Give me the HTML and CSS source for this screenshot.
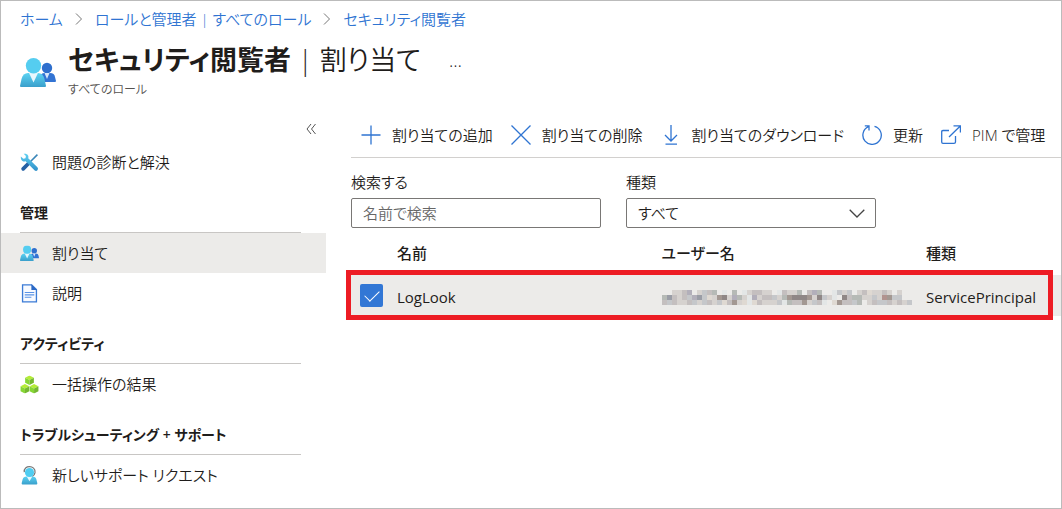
FILE: index.html
```html
<!DOCTYPE html>
<html lang="ja">
<head>
<meta charset="utf-8">
<meta name="viewport" content="width=device-width, initial-scale=1">
<title>セキュリティ閲覧者 | 割り当て</title>
<link rel="stylesheet" href="styles.css">
</head>
<body>
<svg class="defs" aria-hidden="true">
  <defs>
    <linearGradient id="cyan" x1="0" y1="0" x2="0" y2="1"><stop offset="0" stop-color="#5cd3f3"/><stop offset="1" stop-color="#3a9fcb"/></linearGradient>
    <linearGradient id="tool" x1="0" y1="0" x2="0" y2="1"><stop offset="0" stop-color="#5fd0f2"/><stop offset="1" stop-color="#2f8fc8"/></linearGradient>
    <symbol id="users" viewBox="0 0 36 30">
      <circle cx="27" cy="10" r="5.2" fill="#2f6fcd"/>
      <path d="M20 24V20Q20 15.500 24 15h6q4.500 0 5 4l1 4q0 1-1 1z" fill="#3273d3"/>
      <path d="M24.500 15h5L27 21z" fill="#d6e6fa"/>
      <path d="M1 29q-1 0-1-1l1.500-7Q3 15 8 15h10q5 0 6.500 6L26 28q0 1-1 1z" fill="url(#cyan)"/>
      <path d="M9 15h9l-4.500 9.500z" fill="#e8f7fd"/>
      <circle cx="13.500" cy="7.700" r="7.700" fill="#55cdf0"/>
    </symbol>
    <symbol id="cube" viewBox="0 0 10 10">
      <path d="M5 0l4.600 2.300L5 4.800.4 2.300z" fill="#b4ec36"/>
      <path d="M.4 2.300L5 4.800v5.200L.4 7.600z" fill="#86d633"/>
      <path d="M9.600 2.300L5 4.800v5.200l4.600-2.400z" fill="#74b830"/>
    </symbol>
  </defs>
</svg>
<div class="page">
  <nav class="crumbs" aria-label="階層">
    <a href="#">ホーム</a>
    <svg class="sep" viewBox="0 0 8 14"><path d="M1 1.500L6.500 7 1 12.500"/></svg>
    <a href="#">ロールと管理者 | すべてのロール</a>
    <svg class="sep" viewBox="0 0 8 14"><path d="M1 1.500L6.500 7 1 12.500"/></svg>
    <a href="#">セキュリティ閲覧者</a>
  </nav>
  <header class="head">
    <svg class="head-icon"><use href="#users"/></svg>
    <div>
      <div class="title-row">
        <h1><b>セキュリティ閲覧者</b> | 割り当て</h1>
        <button class="more" aria-label="その他">…</button>
      </div>
      <p class="subtitle">すべてのロール</p>
    </div>
  </header>
  <div class="body">
    <aside class="side">
      <button class="collapse" aria-label="折りたたむ"><svg viewBox="0 0 10 12"><path d="M5 1L1 6l4 5M9.500 1l-4 5 4 5"/></svg></button>
      <a class="item" href="#">
        <svg viewBox="0 0 18 18"><path d="M16.500 1.500L10 8" stroke="#3a86b8" stroke-width="1.500" fill="none"/><path d="M8.500 9.500L3 15" stroke="#2460a4" stroke-width="3.600" stroke-linecap="round"/><path d="M.8 3.200l2.400 2.300 2-.6.400-2L3.500.8C7 .2 8.600 2.600 7.800 5l8.700 8.600q1.200 1.500 0 2.800t-2.800 0L5.300 7.900C2.600 8.600.4 6.500.8 3.200z" fill="url(#tool)"/></svg>
        問題の診断と解決</a>
      <h2>管理</h2>
      <a class="item current" href="#" aria-current="page"><svg viewBox="0 0 36 30"><use href="#users"/></svg>割り当て</a>
      <a class="item" href="#">
        <svg viewBox="0 0 18 20"><path d="M1.700.9h9.600l5 5v13H1.700z" fill="#f7faff" stroke="#3b7bd6" stroke-width="1.400"/><path d="M11 .3V6.400h6z" fill="#2c68c4"/><path d="M4 9h10M4 11.500h10M4 14h7" stroke="#5a93e6" stroke-width="1.200"/></svg>
        説明</a>
      <h2>アクティビティ</h2>
      <a class="item" href="#">
        <svg viewBox="0 0 20 19"><use href="#cube" x="4.500" y="0" width="11" height="10"/><use href="#cube" x="-.3" y="9" width="11" height="10"/><use href="#cube" x="9.300" y="9" width="11" height="10"/></svg>
        一括操作の結果</a>
      <h2>トラブルシューティング + サポート</h2>
      <a class="item" href="#">
        <svg viewBox="0 0 18 20"><path d="M3.500 6.500C3 2.500 6 .7 9 .7s6.400 2 5.800 6.300q-.5 3-3 4" fill="none" stroke="#777" stroke-width="1.300"/><path d="M1.500 19.500q-1-.3-.7-1.500l1-4q.8-3 4-3h6.400q3.200 0 4 3l1 4q.3 1.200-.7 1.500z" fill="url(#cyan)"/><path d="M6 11h6l-3 5z" fill="#e8f7fd"/><circle cx="9" cy="6.800" r="4.800" fill="#4fcdf1"/></svg>
        新しいサポート リクエスト</a>
    </aside>
    <main class="main">
      <div class="toolbar">
        <button><svg viewBox="0 0 20 20"><path d="M10 .5v19M.5 10h19"/></svg>割り当ての追加</button>
        <button><svg viewBox="0 0 20 20"><path d="M.5.5l19 19M19.500.5l-19 19"/></svg>割り当ての削除</button>
        <button><svg viewBox="0 0 20 20"><path d="M10 0v15.500M4 10l6 6 6-6M4.500 19.200h11.500"/></svg>割り当てのダウンロード</button>
        <button><svg viewBox="0 0 20 20"><path d="M12.500 1.300a9.200 9.200 0 1 1-6 .4M2.800.8h4.200V5.500"/></svg>更新</button>
        <button><svg viewBox="0 0 20 20"><path d="M8 5.500H2q-1.300 0-1.300 1.300V17q0 1.400 1.300 1.400h11q1.500 0 1.500-1.400v-6M8 12L19.300 1M12.500.8h6.900v6.800"/></svg>PIM で管理</button>
      </div>
      <div class="filters">
        <div class="field"><label for="q">検索する</label><input id="q" type="text" placeholder="名前で検索"></div>
        <div class="field"><label for="kind">種類</label>
          <div class="select"><select id="kind"><option>すべて</option></select><svg viewBox="0 0 16 9"><path d="M.7.8L8 8l7.300-7.200"/></svg></div>
        </div>
      </div>
      <div class="grid">
        <table>
          <thead><tr><th class="check"></th><th>名前</th><th>ユーザー名</th><th class="kind">種類</th></tr></thead>
          <tbody><tr>
            <td class="check"><input type="checkbox" checked aria-label="LogLook を選択"></td>
            <td>LogLook</td>
            <td><svg class="mosaic" id="mosaic" viewBox="0 0 50 3" role="img" aria-label="非表示"></svg></td>
            <td>ServicePrincipal</td>
          </tr></tbody>
        </table>
        <div class="highlight"></div>
      </div>
    </main>
  </div>
</div>
<script src="mosaic.js"></script>
</body>
</html>
```
FILE: styles.css
```css
* { box-sizing: border-box; }
body {
  margin: 0;
  font: 350 15px/22px "Open Sans", "Noto Sans CJK JP", sans-serif;
  font-feature-settings: "palt";
  color: #1f1d1b;
  background: #fff;
}
button, input, select { font: inherit; font-feature-settings: inherit; color: inherit; }
button { border: 0; padding: 0; background: none; white-space: nowrap; }
a { color: inherit; text-decoration: none; }
svg { flex: none; display: block; }
.defs { position: absolute; width: 0; height: 0; }
.page { min-height: 100vh; border: 1px solid #bbb; }

.crumbs { display: flex; align-items: center; gap: 12px; padding: 6px 19px 0; font-size: 15px; line-height: 24px; white-space: nowrap; color: #2f74d2; }
.sep { width: 8px; height: 14px; fill: none; stroke: #777; }

.head { display: flex; padding: 10px 19px 0; gap: 12px; }
.head-icon { width: 36px; height: 30px; margin-top: 17px; }
.title-row { display: flex; align-items: center; gap: 28px; }
h1 { margin: 0; font-size: 27px; line-height: 38px; font-weight: 350; white-space: nowrap; }
h1 b { font-weight: 600; }
.more { font-size: 18px; }
.subtitle { margin: 0; font-size: 12px; color: #55524f; }

.body { display: flex; padding-top: 17px; }
.side { flex: none; width: 325px; }
.collapse { display: block; margin: 0 10px 2px auto; padding: 5px 0; }
.collapse svg { width: 10px; height: 12px; fill: none; stroke: #555; }
.item { display: flex; align-items: center; gap: 13px; height: 40px; padding-left: 19px; }
.item svg { width: 19px; height: 19px; }
.item.current { background: #ecebe9; }
h2 { margin: 0 25px 0 19px; padding: 20px 0 8px; border-bottom: 1px solid #c8c6c4; font-size: 14px; line-height: 22px; font-weight: 600; }

.main { flex: 1; min-width: 0; margin-left: 25px; }
.toolbar { display: flex; gap: 18px; height: 40px; padding: 0 0 5px 10px; border-bottom: 1px solid #d2d0ce; }
.toolbar button { display: flex; align-items: center; gap: 11px; }
.toolbar svg { width: 20px; height: 20px; fill: none; stroke: #2f74d2; stroke-width: 1.300; }

.filters { display: flex; gap: 25px; padding-top: 13px; }
.field { width: 250px; }
.field label { display: block; margin-bottom: 5px; }
.field input, .field select { display: block; width: 100%; height: 30px; padding: 0 11px 1px; border: 1px solid #797775; border-radius: 2px; background: #fff; }
.field input::placeholder { color: #666; opacity: 1; }
.select { display: grid; align-items: center; }
.select > * { grid-area: 1 / 1; }
.field select { appearance: none; }
.select svg { justify-self: end; width: 16px; height: 9px; margin-right: 11px; fill: none; stroke: #444; stroke-width: 1.300; pointer-events: none; }

.grid { position: relative; padding-top: 4px; }
table { width: 100%; table-layout: fixed; border-collapse: collapse; }
th, td { padding: 0; text-align: left; }
th { height: 43px; padding-bottom: 2px; font-weight: 500; }
td { height: 41px; padding-top: 3px; background: #ecebe9; font-weight: 400; }
.check { width: 46px; padding-left: 9px; }
td.check { padding-top: 0; }
.kind { width: 135px; }
.check input { display: block; appearance: none; width: 23px; height: 23px; margin: 0; border-radius: 2px; background: #3277d5; }
.check input::before { content: ""; display: block; width: 13px; height: 7px; margin: 6px 5px; border: solid #fff; border-width: 0 0 1px 1px; transform: rotate(-45deg); }
.mosaic { width: 250px; height: 15px; }
.highlight { position: absolute; left: -5px; right: 8px; bottom: -4px; height: 50px; border: 5px solid #ed1c24; pointer-events: none; }
```
FILE: mosaic.js
```js
// Each character is one cell of the redacted name; the key gives its colour.
const key = { a: "#d6d2cf", b: "#c4bfbf", c: "#b2afba", d: "#9a9da6", e: "#a39892", f: "#8f8786", g: "#dfd9d2", h: "#c5c7ca", i: "#b6bab6", j: "#e3e6e6", k: "#b1938f" };
const rows = [
  "..aabc.ahbi.j.i.jabbaa.jbaai.bci..jhah.abgaaba.a..",
  "idbabhcdhgaefaciajcabbhaiefffeafhaj.fbiiaahakehh..",
  "bhbaabhahbahgbeagjgbaaahjibbeahbj.gebbhi.abhhbabah"
];
const ns = "http://www.w3.org/2000/svg";
const target = document.getElementById("mosaic");
rows.forEach((row, y) => [...row].forEach((c, x) => {
  if (!key[c]) return;
  const cell = document.createElementNS(ns, "rect");
  cell.setAttribute("x", x);
  cell.setAttribute("y", y);
  cell.setAttribute("width", 1);
  cell.setAttribute("height", 1);
  cell.setAttribute("fill", key[c]);
  cell.setAttribute("shape-rendering", "crispEdges");
  target.append(cell);
}));
```
